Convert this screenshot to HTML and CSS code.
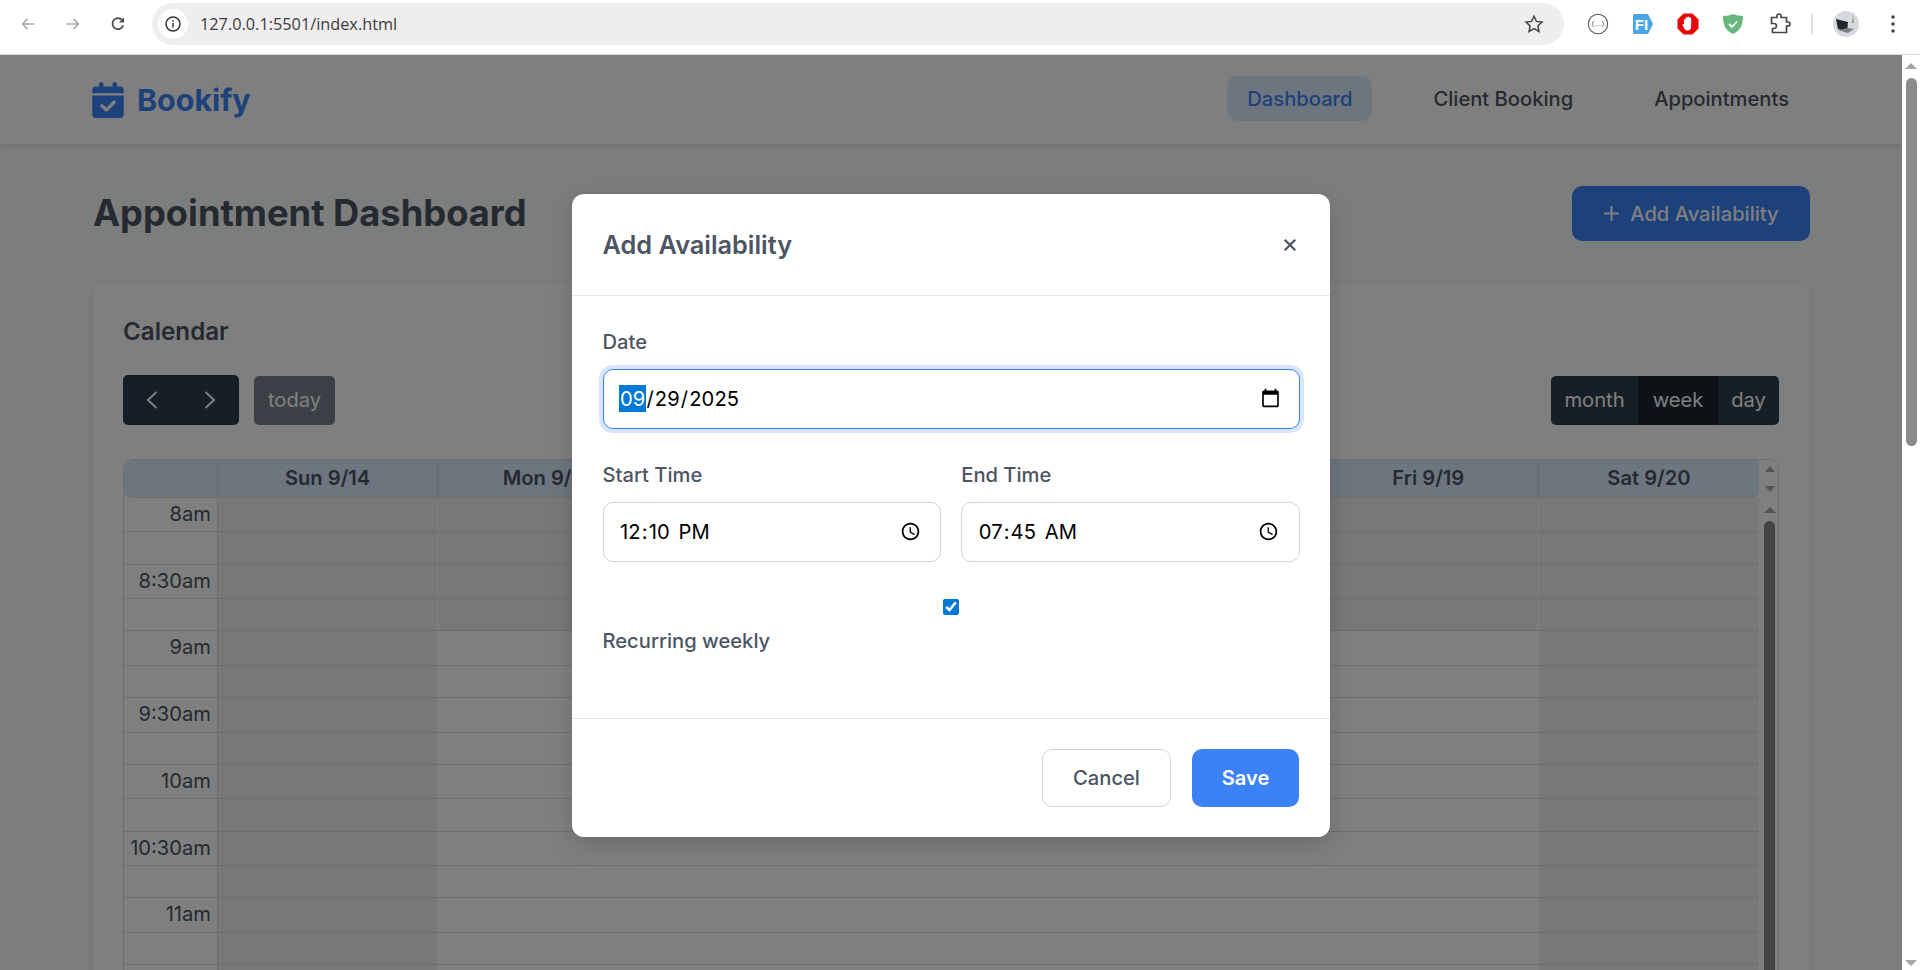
FILE: index.html
```html
<!DOCTYPE html>
<html lang="en-US">
<head>
<meta charset="utf-8">
<title>Bookify</title>
<link rel="stylesheet" href="styles.css">
</head>
<body>
<header class="browser">
  <div class="nav-icons">
    <svg class="bi bi-arrow" viewBox="0 0 16 16"><path d="M14.5 8H2.5M7.5 3L2.5 8l5 5"/></svg>
    <svg class="bi bi-arrow" viewBox="0 0 16 16"><path d="M1.5 8h12M8.5 3l5 5-5 5"/></svg>
    <svg class="bi bi-reload" viewBox="0 0 16 16"><path d="M13.2 9.3A5.5 5.5 0 1 1 12 3.9"/><path class="fill" d="M14 1.4v5h-5z"/></svg>
  </div>
  <div class="omnibox">
    <span class="site-info"><svg viewBox="0 0 16 16" class="info"><circle cx="8" cy="8" r="7"/><path d="M8 7v4.5M8 4.2v1.6"/></svg></span>
    <span class="url">127.0.0.1:5501/index.html</span>
    <svg class="star" viewBox="0 0 20 20"><path d="M10 2.2l2.4 5.2 5.6.7-4.1 3.8 1.1 5.6-5-2.8-5 2.8 1.1-5.6L2 8.1l5.6-.7z"/></svg>
  </div>
  <div class="ext-icons">
    <svg class="ext" viewBox="0 0 22 22"><circle cx="11" cy="11" r="9.7" class="ring"/><text x="11" y="13.2" class="ext-dots">{...}</text></svg>
    <svg class="ext" viewBox="0 0 22 22"><path d="M1 2.5A1.5 1.5 0 0 1 2.500 1H16l5 10-5 10H2.500A1.500 1.500 0 0 1 1 19.500z" fill="#4aa5e8"/><text x="9.500" y="16.500" class="ext-fi">FI</text></svg>
    <svg class="ext" viewBox="0 0 22 22"><path d="M6.500 0.500h9l6 6v9l-6 6h-9l-6-6v-9z" fill="#e8060b"/><path d="M7 12V6.500a1 1 0 0 1 1.800 0V10V4.500a1 1 0 0 1 1.800 0V10V4a1 1 0 0 1 1.800 0V10V5a1 1 0 0 1 1.800 0V13c0 3-1.500 4.500-3.500 4.500-2.500 0-3-1-5-5-.5-1 .8-2 1.600-1z" fill="#fff"/></svg>
    <svg class="ext" viewBox="0 0 22 22"><path d="M11 1c3 1.300 6 2 10 2 0 8-2 14.500-10 18C3 17.500 1 11 1 3c4 0 7-.7 10-2z" fill="#68b87c"/><path d="M7 11l3 3 5-5.500" class="shield-check"/></svg>
    <svg class="ext puzzle" viewBox="0 0 22 22"><path d="M2.500 4.500H8V3a2 2 0 0 1 4 0v1.500h5.500V9H19a2 2 0 0 1 0 4h-1.500v6.500h-14V15.500H5a2.500 2.500 0 0 0 0-5H2.500z"/></svg>
    <span class="sep"></span>
    <svg class="avatar" viewBox="0 0 26 26"><circle cx="13" cy="13" r="13" fill="#d6dae0"/><path d="M20 3l1 9-2 0z" fill="#8d9a72"/><path d="M3 8l12 3-1 10-9-3z" fill="#22252a"/><path d="M5 19l10 3 6-4-6-1z" fill="#7d8085"/></svg>
    <svg class="dots" viewBox="0 0 4 18"><circle cx="2" cy="2" r="1.800"/><circle cx="2" cy="9" r="1.800"/><circle cx="2" cy="16" r="1.800"/></svg>
  </div>
</header>

<div class="viewport">
  <div class="page">
    <nav class="navbar">
      <div class="brand">
        <svg class="brand-icon" viewBox="0 0 448 512"><path d="M128 0c17.700 0 32 14.300 32 32V64H288V32c0-17.700 14.300-32 32-32s32 14.300 32 32V64h48c26.500 0 48 21.500 48 48v48H0V112C0 85.500 21.500 64 48 64H96V32c0-17.700 14.300-32 32-32zM0 192H448V464c0 26.500-21.500 48-48 48H48c-26.500 0-48-21.500-48-48V192zM329 305c9.400-9.400 9.400-24.600 0-33.900s-24.600-9.400-33.900 0l-95 95-47-47c-9.400-9.400-24.600-9.400-33.900 0s-9.400 24.600 0 33.900l64 64c9.400 9.400 24.600 9.400 33.900 0L329 305z"/></svg>
        <span>Bookify</span>
      </div>
      <div class="nav-links">
        <a class="nav-link active">Dashboard</a>
        <a class="nav-link">Client Booking</a>
        <a class="nav-link">Appointments</a>
      </div>
    </nav>
    <main class="content">
      <div class="title-row">
        <h1>Appointment Dashboard</h1>
        <button class="add-btn"><svg viewBox="0 0 16 16"><path d="M8 1v14M1 8h14"/></svg>Add Availability</button>
      </div>
      <section class="card">
        <h2>Calendar</h2>
        <div class="toolbar">
          <div class="tb-left">
            <div class="btn-group">
              <button class="fc-btn icon"><svg viewBox="0 0 14 18"><path d="M11.500 1L3 9l8.500 8"/></svg></button>
              <button class="fc-btn icon"><svg viewBox="0 0 14 18"><path d="M2.500 1L11 9l-8.500 8"/></svg></button>
            </div>
            <button class="fc-btn today">today</button>
          </div>
          <div class="btn-group">
            <button class="fc-btn month">month</button>
            <button class="fc-btn week">week</button>
            <button class="fc-btn day">day</button>
          </div>
        </div>
        <div class="calendar">
          <div class="cal-head">
            <div class="cols head-cols">
              <div class="th axis-th"></div>
              <div class="th">Sun 9/14</div>
              <div class="th">Mon 9/15</div>
              <div class="th">Tue 9/16</div>
              <div class="th">Wed 9/17</div>
              <div class="th">Thu 9/18</div>
              <div class="th">Fri 9/19</div>
              <div class="th">Sat 9/20</div>
            </div>
            <div class="mini-bar head-bar"><i class="tri up"></i><i class="tri down"></i></div>
          </div>
          <div class="cal-body">
            <div class="slots">
              <div class="cols"><div class="axis">8am</div><div class="cell nb"></div><div class="cell nb"></div><div class="cell nb"></div><div class="cell nb"></div><div class="cell nb"></div><div class="cell nb"></div><div class="cell nb"></div></div>
              <div class="cols"><div class="axis">8:30am</div><div class="cell nb"></div><div class="cell nb"></div><div class="cell nb"></div><div class="cell nb"></div><div class="cell nb"></div><div class="cell nb"></div><div class="cell nb"></div></div>
              <div class="cols"><div class="axis">9am</div><div class="cell nb"></div><div class="cell"></div><div class="cell"></div><div class="cell"></div><div class="cell"></div><div class="cell"></div><div class="cell nb"></div></div>
              <div class="cols"><div class="axis">9:30am</div><div class="cell nb"></div><div class="cell"></div><div class="cell"></div><div class="cell"></div><div class="cell"></div><div class="cell"></div><div class="cell nb"></div></div>
              <div class="cols"><div class="axis">10am</div><div class="cell nb"></div><div class="cell"></div><div class="cell"></div><div class="cell"></div><div class="cell"></div><div class="cell"></div><div class="cell nb"></div></div>
              <div class="cols"><div class="axis">10:30am</div><div class="cell nb"></div><div class="cell"></div><div class="cell"></div><div class="cell"></div><div class="cell"></div><div class="cell"></div><div class="cell nb"></div></div>
              <div class="cols"><div class="axis">11am</div><div class="cell nb"></div><div class="cell"></div><div class="cell"></div><div class="cell"></div><div class="cell"></div><div class="cell"></div><div class="cell nb"></div></div>
              <div class="cols"><div class="axis">11:30am</div><div class="cell nb"></div><div class="cell"></div><div class="cell"></div><div class="cell"></div><div class="cell"></div><div class="cell"></div><div class="cell nb"></div></div>
            </div>
            <div class="mini-bar body-bar"><i class="tri up big"></i><b class="mini-thumb"></b></div>
          </div>
        </div>
      </section>
    </main>
    <div class="overlay">
      <div class="modal">
        <div class="modal-head">
          <h3>Add Availability</h3>
          <svg class="close" viewBox="0 0 12 12"><path d="M1.500 1.500l9 9M10.500 1.500l-9 9"/></svg>
        </div>
        <form class="modal-body">
          <div class="field">
            <label for="date">Date</label>
            <input id="date" class="date-input" type="date" value="2025-09-29" autofocus>
          </div>
          <div class="field-row">
            <div class="field">
              <label for="start">Start Time</label>
              <input id="start" type="time" value="12:10">
            </div>
            <div class="field">
              <label for="end">End Time</label>
              <input id="end" type="time" value="07:45">
            </div>
          </div>
          <div class="check-field">
            <input id="rec" type="checkbox" checked>
            <label for="rec">Recurring weekly</label>
          </div>
        </form>
        <div class="modal-foot">
          <button class="m-btn cancel">Cancel</button>
          <button class="m-btn save">Save</button>
        </div>
      </div>
    </div>
  </div>
  <aside class="page-bar">
    <i class="tri up big light"></i>
    <b class="page-thumb"></b>
    <i class="tri down big light bottom"></i>
  </aside>
</div>
</body>
</html>
```
FILE: styles.css
```css
* { box-sizing: border-box; }
html, body { margin: 0; height: 100%; overflow: hidden; }
body { font-family: Inter, "Liberation Sans", sans-serif; color: #4b5563; background: #fff; display: flex; flex-direction: column; }
button { font-family: inherit; cursor: pointer; }

/* browser chrome */
.browser { height: 55px; flex: none; background: #fff; border-bottom: 1px solid #d9d9dc; display: flex; align-items: center; padding-bottom: 6px; }
.nav-icons { width: 152px; flex: none; display: flex; align-items: center; padding-left: 20px; gap: 29px; }
.bi { width: 16px; height: 16px; flex: none; fill: none; stroke-width: 1.500; }
.bi-arrow { stroke: #a9a9a9; }
.bi-reload { stroke: #474747; stroke-width: 1.700; }
.bi-reload .fill { fill: #474747; stroke: none; }
.omnibox { width: 1412px; height: 42px; flex: none; background: #efedee; border-radius: 21px; display: flex; align-items: center; padding: 0 20px 0 6px; }
.site-info { width: 30px; height: 30px; border-radius: 50%; background: #fff; display: flex; align-items: center; justify-content: center; flex: none; }
.info { width: 16px; height: 16px; fill: none; stroke: #333; stroke-width: 1.500; }
.url { font-family: "Open Sans", sans-serif; font-size: 16.300px; color: #3c3c3e; margin-left: 12px; flex: 1; }
.star { width: 20px; height: 20px; fill: none; stroke: #444; stroke-width: 1.500; flex: none; }
.ext-icons { flex: 1; display: flex; align-items: center; padding-left: 23px; }
.ext { width: 22px; height: 22px; flex: none; margin-right: 23px; }
.ring { fill: #fff; stroke: #555; stroke-width: 1.100; }
.ext-dots { font-family: "DejaVu Sans", sans-serif; font-size: 6.500px; fill: #555; text-anchor: middle; }
.ext-fi { font-family: "Liberation Sans", sans-serif; font-weight: 700; font-size: 15px; fill: #fff; text-anchor: middle; }
.shield-check { fill: none; stroke: #fff; stroke-width: 1.800; }
.puzzle { fill: none; stroke: #474747; stroke-width: 1.700; margin-left: 2px; margin-right: 20px; }
.sep { width: 2px; height: 20px; background: #e0e0e2; flex: none; margin-right: 20px; }
.avatar { width: 26px; height: 26px; flex: none; margin-right: 32px; }
.dots { width: 4px; height: 18px; fill: #474747; flex: none; }

/* page */
.viewport { flex: 1; min-height: 0; display: flex; }
.page { flex: 1; min-width: 0; position: relative; overflow: hidden; background: #f9fafb; }
.navbar { height: 89px; background: #fff; display: flex; align-items: center; justify-content: space-between; padding: 0 93px 0 92px; box-shadow: 0 2px 8px rgba(0,0,0,.12); position: relative; }
.brand { display: flex; align-items: center; gap: 13px; color: #3b82f6; font-size: 30.400px; font-weight: 700; }
.brand-icon { width: 32px; height: 36px; fill: #3b82f6; }
.nav-links { display: flex; gap: 41px; margin-bottom: 2px; }
.nav-link { font-size: 20.160px; font-weight: 500; color: #4b5563; padding: 0 20px; height: 45px; display: flex; align-items: center; border-radius: 10px; }
.nav-link.active { background: #dbeafe; color: #3b82f6; }

.content { padding: 42px 92px 0 93px; }
.title-row { display: flex; align-items: center; justify-content: space-between; height: 55px; margin-bottom: 42px; }
h1 { margin: 0 0 2px; font-size: 36.300px; font-weight: 700; color: #4b5563; }
.add-btn { height: 55px; width: 238px; border: 0; border-radius: 10px; background: #3b82f6; color: #fff; font-size: 20.160px; font-weight: 500; display: flex; align-items: center; justify-content: center; gap: 10px; }
.add-btn svg { width: 17px; height: 17px; fill: none; stroke: #fff; stroke-width: 2; }

.card { background: #fff; border-radius: 12px; padding: 30px 31px 30px 30px; height: 900px; box-shadow: 0 2px 6px rgba(0,0,0,.08); }
h2 { margin: 0 0 26px; font-size: 24.200px; line-height: 38px; font-weight: 600; color: #4b5563; height: 36px; }
.toolbar { display: flex; justify-content: space-between; align-items: center; height: 50px; margin-bottom: 34px; }
.tb-left { display: flex; align-items: center; gap: 15px; }
.btn-group { display: flex; border-radius: 5px; overflow: hidden; }
.fc-btn { border: 0; background: #2c3e50; color: #fff; font-size: 20.160px; height: 49px; padding: 0 0 2px; display: flex; align-items: center; justify-content: center; }
.fc-btn.icon { width: 58px; height: 50px; padding: 0; }
.fc-btn.icon svg { width: 14px; height: 18px; fill: none; stroke: #fff; stroke-width: 2; }
.fc-btn.today { width: 81px; opacity: .65; border-radius: 5px; }
.fc-btn.month { width: 87px; }
.fc-btn.week { width: 80px; background: #1a252f; }
.fc-btn.day { width: 61px; }

.calendar { border: 1px solid #ddd; border-radius: 10px 10px 0 0; overflow: hidden; }
.cal-head, .cal-body { display: flex; }
.cols { flex: 1; display: grid; grid-template-columns: 94px repeat(7, 1fr); }
.slots { flex: 1; min-width: 0; }
.head-cols { border-bottom: 1px solid #ddd; background: #dbeafe; border-radius: 0 0 8px 8px; height: 38px; }
.th { font-size: 20.160px; font-weight: 600; color: #4b5563; text-align: center; line-height: 36px; border-right: 1px solid #d0d7df; }
.th:last-child { border-right: 0; }
.axis { height: 66.740px; border-right: 1px solid #ddd; border-bottom: 1px solid #ddd; font-size: 20.160px; line-height: 32px; text-align: right; padding-right: 6px; color: #4b5563; white-space: nowrap; background-image: linear-gradient(to right, #c8c8c8 50%, transparent 50%); background-size: 2px 1px; background-repeat: repeat-x; background-position: 0 33.400px; }
.cell { height: 66.740px; border-right: 1px solid transparent; border-bottom: 1px solid #ddd; background-image: linear-gradient(to right, #c8c8c8 50%, transparent 50%); background-size: 2px 1px; background-repeat: repeat-x; background-position: 0 33.400px; background-clip: padding-box; }
.cell:last-child { border-right: 0; }
.cell.nb { background-color: #f0f0f0; }
.mini-bar { width: 19px; flex: none; display: flex; flex-direction: column; align-items: center; background: #fff; padding-left: 2px; }
.head-bar { height: 38px; justify-content: space-between; padding-top: 6px; padding-bottom: 6px; }
.body-bar { padding-top: 9px; }
.mini-thumb { width: 11px; height: 600px; margin-top: 8px; border-radius: 6px; background: #888; }

.tri { width: 0; height: 0; display: block; border-left: 5.500px solid transparent; border-right: 5.500px solid transparent; }
.tri.up { border-bottom: 6px solid #a8a8a8; }
.tri.down { border-top: 6px solid #a8a8a8; }
.tri.big { border-left-width: 6.500px; border-right-width: 6.500px; }
.tri.big.up { border-bottom-width: 6px; }
.tri.light.up { border-bottom-color: #a6a6a6; }
.tri.light.down { border-top-color: #a6a6a6; }

/* page scrollbar */
.page-bar { width: 18px; flex: none; background: #fff; display: flex; flex-direction: column; align-items: center; padding: 8px 0 4px; }
.page-thumb { width: 11px; height: 368px; border-radius: 6px; background: #8b8b8b; margin-top: 9px; }
.tri.bottom { margin-top: auto; }

/* modal */
.overlay { position: absolute; inset: 0; padding-top: 6px; background: rgba(0,0,0,.5); display: flex; align-items: center; justify-content: center; }
.modal { width: 758px; height: 643px; background: #fff; border-radius: 12px; display: flex; flex-direction: column; box-shadow: 0 8px 24px rgba(0,0,0,.15); }
.modal-head { height: 102px; flex: none; border-bottom: 1px solid #e5e7eb; display: flex; align-items: center; justify-content: space-between; padding: 0 33px 0 30.500px; }
h3 { margin: 0; font-size: 25.300px; font-weight: 600; color: #4b5563; }
.close { width: 14px; height: 14px; fill: none; stroke: #4b5563; stroke-width: 1.900; }
.modal-body { flex: 1; padding: 34px 30.500px 0; }
.field { display: flex; flex-direction: column; flex: 1; min-width: 0; margin-bottom: 33.500px; }
.field label, .check-field label { font-size: 20.160px; line-height: 24px; font-weight: 500; color: #4b5563; }
.field label { margin-bottom: 15px; }
.field input { height: 60px; border: 1px solid #d1d5db; border-radius: 10px; padding: 0 16px 0 15.500px; font-family: Inter, sans-serif; font-size: 20.160px; letter-spacing: .1px; color: #000; background: #fff; outline: 0; }
.field .date-input { padding-bottom: 2px; }
.field input:focus { border-color: #3b82f6; box-shadow: 0 0 0 4px rgba(59,130,246,.2); }
.field input:focus::-webkit-datetime-edit-month-field { background: #0078d7; color: #fff; }
.field input::-webkit-datetime-edit-ampm-field { margin-left: 3px; }
.field-row { display: flex; gap: 20.500px; }
.check-field { margin-top: 4px; }
.check-field input { display: block; width: 16px; height: 16px; margin: 0 auto 14px; accent-color: #0078d7; }
.check-field label { display: block; }
.modal-foot { height: 119px; flex: none; border-top: 1px solid #e5e7eb; display: flex; justify-content: flex-end; align-items: flex-start; gap: 21px; padding: 30px 31px 0 0; }
.m-btn { height: 58px; padding: 0 0 2px; border-radius: 10px; font-size: 20.160px; font-weight: 500; }
.m-btn.cancel { width: 129px; background: #fff; border: 1px solid #d1d5db; color: #4b5563; }
.m-btn.save { width: 107px; background: #3b82f6; border: 0; color: #fff; font-weight: 600; }
```
